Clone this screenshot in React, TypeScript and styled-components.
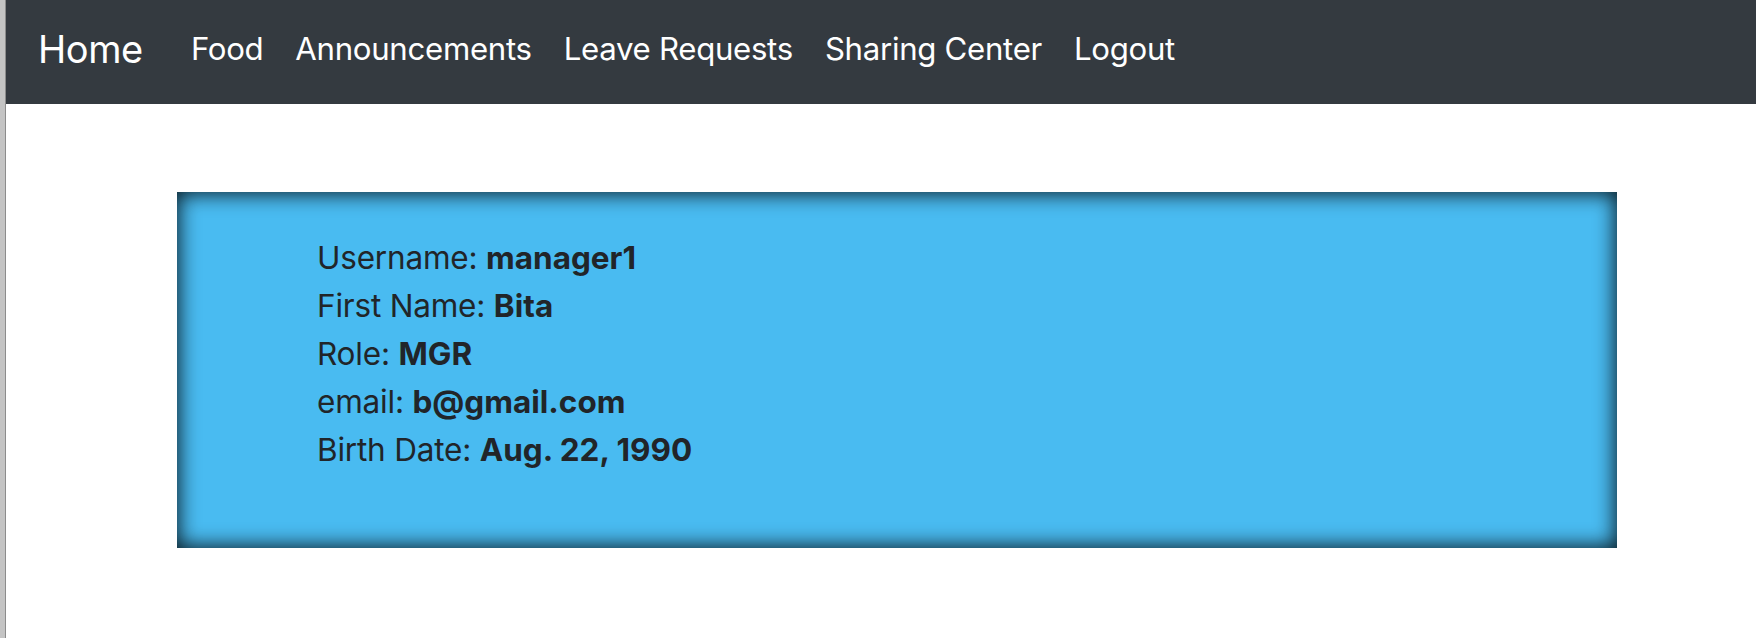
import React from "react";
import styled, { createGlobalStyle } from "styled-components";

const GlobalStyle = createGlobalStyle`
  html, body {
    margin: 0;
    padding: 0;
    background: #ffffff;
  }
  body {
    font-family: Inter, "Noto Sans", sans-serif;
    color: #212529;
  }
`;

const Frame = styled.div`
  display: flex;
  min-height: 638px;
  width: 1756px;
`;

const WindowEdge = styled.div`
  width: 5px;
  flex: none;
  background: #c4c4c4;
  border-right: 1px solid #8c8c8c;
`;

const Page = styled.div`
  flex: 1;
  display: flex;
  flex-direction: column;
`;

const NavBar = styled.nav`
  height: 104px;
  background: #343a40;
  display: flex;
  align-items: center;
  padding: 0 32px 6px;
  box-sizing: border-box;
`;

const Brand = styled.a`
  color: #ffffff;
  font-size: 38px;
  letter-spacing: -0.4px;
  margin-right: 32px;
  text-decoration: none;
`;

const NavLinks = styled.div`
  display: flex;
  align-items: center;
`;

const NavLink = styled.a`
  color: #ffffff;
  font-size: 31.2px;
  letter-spacing: -0.3px;
  padding: 0 16px;
  text-decoration: none;
`;

const Main = styled.main`
  padding: 88px 0 0 171px;
`;

const InfoCard = styled.section`
  width: 1440px;
  box-sizing: border-box;
  background: #49bbf1;
  box-shadow: inset 0 0 20px 2px rgba(0, 0, 0, 0.85);
  padding: 42px 0 74px 140px;
`;

const Line = styled.div`
  font-size: 31.5px;
  line-height: 48px;
  letter-spacing: -0.2px;
  color: #212529;
`;

const Value = styled.b`
  font-weight: 700;
  letter-spacing: 0;
`;

const links = ["Food", "Announcements", "Leave Requests", "Sharing Center", "Logout"];

const info: [string, string][] = [
  ["Username", "manager1"],
  ["First Name", "Bita"],
  ["Role", "MGR"],
  ["email", "b@gmail.com"],
  ["Birth Date", "Aug. 22, 1990"],
];

export default function App() {
  return (
    <>
      <GlobalStyle />
      <Frame>
        <WindowEdge />
        <Page>
          <NavBar>
            <Brand href="#">Home</Brand>
            <NavLinks>
              {links.map((l) => (
                <NavLink key={l} href="#">
                  {l}
                </NavLink>
              ))}
            </NavLinks>
          </NavBar>
          <Main>
            <InfoCard>
              {info.map(([k, v]) => (
                <Line key={k}>
                  {k}: <Value>{v}</Value>
                </Line>
              ))}
            </InfoCard>
          </Main>
        </Page>
      </Frame>
    </>
  );
}
